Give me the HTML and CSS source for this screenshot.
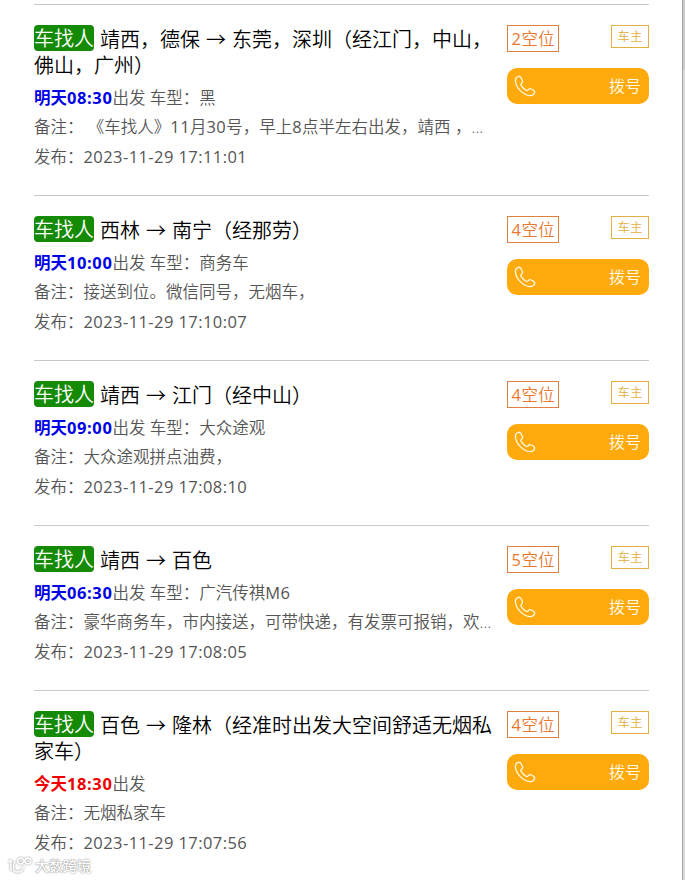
FILE: index.html
```html
<!DOCTYPE html>
<html lang="zh-CN">
<head>
<meta charset="utf-8">
<title>拼车信息</title>
<link rel="stylesheet" href="styles.css">
</head>
<body>
<svg width="0" height="0" class="defs"><symbol id="phone" viewBox="0 0 22 22"><path d="M4.6 1.3C3 1.7 1.3 3.5 1.4 5.8c.3 6.8 7.900 14.500 14.600 14.800 2.300.1 4.200-1.500 4.600-3 .3-1.100-.2-1.800-1-2.300l-2.300-1.300c-1-.6-1.900-.4-2.600.3l-1 1c-.6.5-1.100.4-1.700 0-1.700-1.100-3.800-3.200-4.900-4.900-.4-.6-.4-1.200.1-1.700l.8-1c.7-.7.8-1.500.3-2.500L6.900 2.500c-.5-.9-1.200-1.400-2.300-1.200Z" fill="none" stroke="currentColor" stroke-width="1.300"/></symbol></svg>
<main class="list">
  <article class="trip">
    <div class="info">
      <h2><span class="kind">车找人</span> 靖西，德保 → 东莞，深圳（经江门，中山，佛山，广州）</h2>
      <p><b>明天<span class="time">08:30</span></b>出发 车型：黑</p>
      <p class="note">备注： 《车找人》<span class="num">11</span>月<span class="num">30</span>号，早上<span class="num">8</span>点半左右出发，靖西 ，百色上车</p>
      <p>发布：<span class="date">2023-11-29 17:11:01</span></p>
    </div>
    <div class="side">
      <div class="tags"><span class="seats"><span class="num">2</span>空位</span><span class="owner">车主</span></div>
      <a class="call"><svg><use href="#phone"/></svg><span>拨号</span></a>
    </div>
  </article>
  <article class="trip">
    <div class="info">
      <h2><span class="kind">车找人</span> 西林 → 南宁（经那劳）</h2>
      <p><b>明天<span class="time">10:00</span></b>出发 车型：商务车</p>
      <p class="note">备注：接送到位。微信同号，无烟车，</p>
      <p>发布：<span class="date">2023-11-29 17:10:07</span></p>
    </div>
    <div class="side">
      <div class="tags"><span class="seats"><span class="num">4</span>空位</span><span class="owner">车主</span></div>
      <a class="call"><svg><use href="#phone"/></svg><span>拨号</span></a>
    </div>
  </article>
  <article class="trip">
    <div class="info">
      <h2><span class="kind">车找人</span> 靖西 → 江门（经中山）</h2>
      <p><b>明天<span class="time">09:00</span></b>出发 车型：大众途观</p>
      <p class="note">备注：大众途观拼点油费，</p>
      <p>发布：<span class="date">2023-11-29 17:08:10</span></p>
    </div>
    <div class="side">
      <div class="tags"><span class="seats"><span class="num">4</span>空位</span><span class="owner">车主</span></div>
      <a class="call"><svg><use href="#phone"/></svg><span>拨号</span></a>
    </div>
  </article>
  <article class="trip">
    <div class="info">
      <h2><span class="kind">车找人</span> 靖西 → 百色</h2>
      <p><b>明天<span class="time">06:30</span></b>出发 车型：广汽传祺<span class="num">M6</span></p>
      <p class="note">备注：豪华商务车，市内接送，可带快递，有发票可报销，欢迎来电</p>
      <p>发布：<span class="date">2023-11-29 17:08:05</span></p>
    </div>
    <div class="side">
      <div class="tags"><span class="seats"><span class="num">5</span>空位</span><span class="owner">车主</span></div>
      <a class="call"><svg><use href="#phone"/></svg><span>拨号</span></a>
    </div>
  </article>
  <article class="trip">
    <div class="info">
      <h2><span class="kind">车找人</span> 百色 → 隆林（经准时出发大空间舒适无烟私家车）</h2>
      <p><b class="today">今天<span class="time">18:30</span></b>出发</p>
      <p class="note">备注：无烟私家车</p>
      <p>发布：<span class="date">2023-11-29 17:07:56</span></p>
    </div>
    <div class="side">
      <div class="tags"><span class="seats"><span class="num">4</span>空位</span><span class="owner">车主</span></div>
      <a class="call"><svg><use href="#phone"/></svg><span>拨号</span></a>
    </div>
  </article>
</main>
<div class="edge"></div>
<div class="mark"><svg viewBox="0 0 26 18"><path d="M1.500 5 4 3.500V14M7.500 4.500c-2.500 5-1.500 10.500 3 10.500 3.500 0 5.500-2 5.500-5M15.500 6.200a2.900 2.900 0 1 1 .3-4l3 3.800a2.900 2.900 0 1 0 0-4l-3.300 4.200"/></svg><span>大数跨境</span></div>
</body>
</html>
```

FILE: styles.css
```css
* { box-sizing: border-box; }
body {
  margin: 0;
  height: 880px;
  overflow: hidden;
  position: relative;
  background: #fff;
  color: #555;
  font: 350 16.5px/29.5px "Open Sans", "Noto Sans CJK SC", sans-serif;
}
.defs { position: absolute; }
.list { padding: 4px 36px 0 34px; }
.trip {
  display: flex;
  justify-content: space-between;
  border-top: 1px solid #c8c8c8;
  padding: 20px 0 24px;
}
.info { width: 460px; }
h2 {
  margin: 0 0 4px;
  padding-top: 1.5px;
  color: #000;
  font-size: 20px;
  font-weight: 350;
  line-height: 26px;
  word-spacing: .8px;
}
.kind {
  display: inline-block;
  height: 26px;
  margin-top: -1.5px;
  vertical-align: top;
  border-radius: 4px;
  background: #148a05;
  color: #fff;
  line-height: 28px;
}
p { margin: 0; height: 29.5px; white-space: nowrap; }
.note { overflow: hidden; text-overflow: ellipsis; }
b { color: #0000e6; font-weight: 700; }
.time { letter-spacing: .6px; }
.today { color: #f00000; }
.num, .date { font-weight: 400; letter-spacing: .42px; }
.side { width: 142px; }
.tags { display: flex; justify-content: space-between; align-items: flex-start; height: 43px; }
.seats {
  width: 52px;
  height: 27px;
  border: 1px solid #e08040;
  color: #e87830;
  line-height: 25px;
  text-align: center;
  white-space: nowrap;
}
.owner {
  width: 38px;
  height: 23px;
  border: 1px solid #e2b040;
  color: #e2b040;
  font-size: 12.5px;
  line-height: 21px;
  text-align: center;
}
.call {
  display: flex;
  align-items: center;
  justify-content: space-between;
  height: 36px;
  padding: 0 8px 0 7px;
  border-radius: 10px;
  background: #ffaa0c;
  color: #fffbe8;
  font-size: 16px;
}
.call span { padding-top: 2px; }
.call svg { width: 22px; height: 22px; }
.edge {
  position: absolute;
  top: 0;
  right: 0;
  width: 3px;
  height: 880px;
  border-left: 1px solid #a6a6a6;
  background: linear-gradient(#cbcbcb 70px, #dadada 70px);
}
.mark {
  position: absolute;
  left: 7px;
  top: 856px;
  display: flex;
  gap: 2px;
  align-items: center;
  height: 20px;
  color: #fff;
  font-size: 14px;
  font-weight: 500;
  line-height: 20px;
  text-shadow: 0 0 1px #888, 0 0 2px #999;
}
.mark svg {
  width: 26px;
  height: 18px;
  fill: none;
  stroke: #fff;
  stroke-width: 1.6;
  filter: drop-shadow(0 0 1px #888);
}
```
